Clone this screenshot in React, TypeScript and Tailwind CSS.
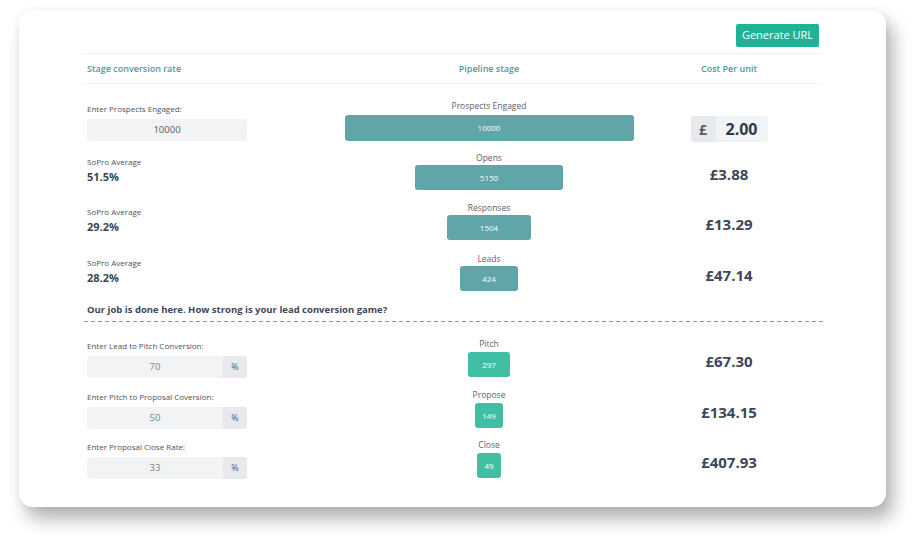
import React from "react";

const font = { fontFamily: '"Open Sans", "Liberation Sans", sans-serif' };

type Stage = {
  label: string;
  value: string;
  bar: string;
  count: string;
  width: string;
  cost: string;
  h: string;
  green?: boolean;
};

const topRows: Stage[] = [
  { label: "SoPro Average", value: "51.5%", bar: "Opens", count: "5150", width: "w-[148px]", cost: "£3.88", h: "h-[50px]" },
  { label: "SoPro Average", value: "29.2%", bar: "Responses", count: "1504", width: "w-[84px]", cost: "£13.29", h: "h-[51px]" },
  { label: "SoPro Average", value: "28.2%", bar: "Leads", count: "424", width: "w-[58px]", cost: "£47.14", h: "h-[50px]" },
];

const bottomRows: Stage[] = [
  { label: "Enter Lead to Pitch Conversion:", value: "70", bar: "Pitch", count: "297", width: "w-[42px]", cost: "£67.30", h: "h-[51px]" },
  { label: "Enter Pitch to Proposal Coversion:", value: "50", bar: "Propose", count: "149", width: "w-[28px]", cost: "£134.15", h: "h-[50px]" },
  { label: "Enter Proposal Close Rate:", value: "33", bar: "Close", count: "49", width: "w-[24px]", cost: "£407.93", h: "h-[51px]" },
];

const BarCell = ({ s, top, gap }: { s: Stage; top: string; gap: string }) => (
  <div className={`flex flex-col items-center ${top}`}>
    <p className="text-[8.5px] leading-[12px] text-[#5b6270]">{s.bar}</p>
    <div
      className={`${s.width} h-[25px] ${gap} rounded-[3px] flex items-center justify-center text-[8px] text-white ${
        s.green ? "bg-[#40bfa5]" : "bg-[#60a5a8]"
      }`}
    >
      {s.count}
    </div>
  </div>
);

export default function App() {
  return (
    <div className="w-[920px] h-[548px] bg-white pt-[10px] pl-[19px]" style={font}>
      <div className="w-[867px] h-[497px] bg-white rounded-[14px] shadow-[7px_12px_18px_rgba(0,0,0,0.3),0_0_8px_rgba(0,0,0,0.05)] pt-[14px] pl-[63px]">
        <div className="w-[741px]">
          <div className="flex justify-end pr-[4px]">
            <button className="h-[23px] w-[83px] rounded-[2px] bg-[#1db394] text-white text-[11px]">
              Generate URL
            </button>
          </div>

          <div className="mt-[6px] h-[31px] border-y border-[#f1f2f4] grid grid-cols-[261px_292px_188px] items-center text-[9px] font-semibold text-[#4e9a9c]">
            <p className="pl-[5px]">Stage conversion rate</p>
            <p className="text-center">Pipeline stage</p>
            <p className="text-center">Cost Per unit</p>
          </div>

          <div className="mt-[12px] h-[50px] grid grid-cols-[261px_292px_188px] items-start">
            <div className="pl-[5px] pt-[7px]">
              <p className="text-[8px] leading-[12px] text-[#4b5261]">Enter Prospects Engaged:</p>
              <div className="mt-[4px] w-[160px] h-[22px] rounded-[3px] bg-[#f2f3f5] flex items-center justify-center text-[9.5px] text-[#555b66]">
                10000
              </div>
            </div>
            <BarCell
              s={{ label: "", value: "", bar: "Prospects Engaged", count: "10000", width: "w-[289px] !h-[26px]", cost: "", h: "" }}
              top="pt-[4px]"
              gap="mt-[3px]"
            />
            <div className="flex justify-center pt-[20px]">
              <div className="flex h-[26px] w-[77px] rounded-[3px] overflow-hidden bg-[#f2f3f5]">
                <div className="w-[25px] bg-[#e8e9ec] flex items-center justify-center text-[14px] font-bold text-[#555b66]">
                  £
                </div>
                <div className="flex-1 flex items-center justify-center text-[16px] font-bold text-[#2f3a4d]">
                  2.00
                </div>
              </div>
            </div>
          </div>

          {topRows.map((s, i) => (
            <div key={i} className={`${s.h} grid grid-cols-[261px_292px_188px] items-start`}>
              <div className="pl-[5px] pt-[10px]">
                <p className="text-[8px] leading-[12px] text-[#4b5261]">{s.label}</p>
                <p className="text-[11px] leading-[15px] font-bold text-[#3b4556] mt-[1px]">{s.value}</p>
              </div>
              <BarCell s={s} top="pt-[6px]" gap="mt-[1px]" />
              <p className="text-center pt-[18px] text-[15px] leading-[20px] font-bold text-[#3d4758]">{s.cost}</p>
            </div>
          ))}

          <p className="pl-[5px] mt-[6px] text-[9.5px] leading-[14px] font-bold text-[#3d4758]">
            Our job is done here. How strong is your lead conversion game?
          </p>
          <div className="ml-[2px] mt-[4px] h-px bg-[repeating-linear-gradient(90deg,#3fbf9f_0_4px,transparent_4px_7px)]" />

          <div className="mt-[12px]">
            {bottomRows.map((s, i) => (
              <div key={i} className={`${s.h} grid grid-cols-[261px_292px_188px] items-start`}>
                <div className="pl-[5px] pt-[6px]">
                  <p className="text-[8px] leading-[12px] text-[#4b5261]">{s.label}</p>
                  <div className="mt-[4px] w-[160px] h-[22px] rounded-[3px] overflow-hidden bg-[#f2f3f5] flex">
                    <div className="flex-1 flex items-center justify-center text-[9.5px] text-[#7a808a]">{s.value}</div>
                    <div className="w-[24px] bg-[#e8e9ec] flex items-center justify-center text-[9px] text-[#555b66]">%</div>
                  </div>
                </div>
                <BarCell s={{ ...s, green: true }} top="pt-[4px]" gap="mt-[2px]" />
                <p className="text-center pt-[17px] text-[15px] leading-[20px] font-bold text-[#3d4758]">{s.cost}</p>
              </div>
            ))}
          </div>
        </div>
      </div>
    </div>
  );
}
